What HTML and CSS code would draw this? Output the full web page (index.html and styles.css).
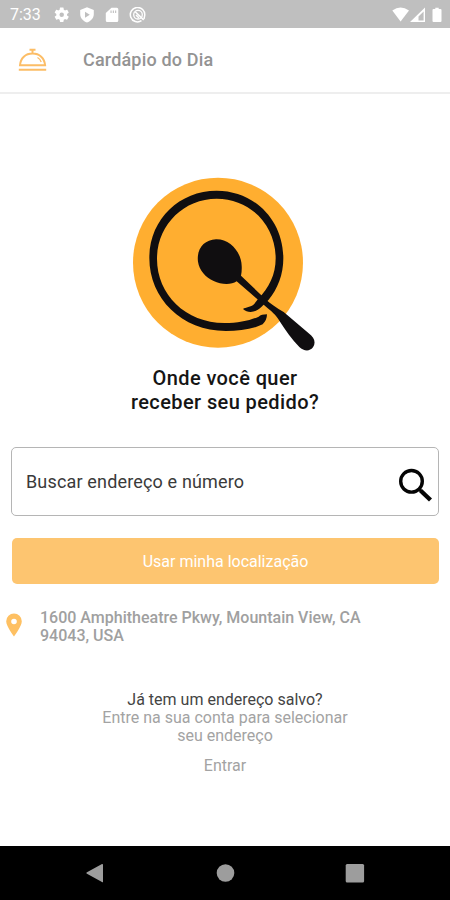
FILE: index.html
```html
<!DOCTYPE html>
<html lang="pt-BR">
<head>
<meta charset="utf-8">
<meta name="viewport" content="width=device-width, initial-scale=1">
<title>Cardápio do Dia</title>
<link rel="stylesheet" href="styles.css">
</head>
<body>
<div class="screen">
  <div class="status">
    <span class="clock">7:33</span>
    <svg class="status-left" viewBox="0 0 92 16" fill="#fff">
      <g transform="translate(-1.300 -1.300) scale(.75)"><path fill-rule="evenodd" d="M19.140 12.940a7 7 0 0 0 0-1.880l2.030-1.580a.5.5 0 0 0 .12-.61l-1.920-3.320a.5.5 0 0 0-.59-.22l-2.390.96a7 7 0 0 0-1.620-.94l-.36-2.540a.5.5 0 0 0-.48-.41h-3.840a.5.5 0 0 0-.47.41l-.36 2.540a7 7 0 0 0-1.620.94l-2.390-.96a.5.5 0 0 0-.59.22L2.740 8.870a.5.5 0 0 0 .12.61l2.030 1.580a7 7 0 0 0 0 1.880l-2.030 1.580a.5.5 0 0 0-.12.61l1.920 3.320c.12.22.37.29.59.22l2.390-.96c.5.38 1.030.7 1.620.94l.36 2.540c.05.24.24.41.48.41h3.840c.24 0 .44-.17.47-.41l.36-2.540a7 7 0 0 0 1.620-.94l2.390.96c.22.08.47 0 .59-.22l1.920-3.320a.5.5 0 0 0-.12-.61zM12 15a3 3 0 1 1 0-6 3 3 0 0 1 0 6z"/></g>
      <path fill-rule="evenodd" d="M33 .3l6.800 2.700v4.300c0 3.700-3 6.900-6.800 8.200-3.800-1.300-6.800-4.500-6.800-8.200V3zM31 4.700v6l4.800-3z"/>
      <path fill-rule="evenodd" d="M57.500.8h5.300q1.500 0 1.500 1.500v11.200q0 1.500-1.500 1.500h-9.500q-1.500 0-1.500-1.500V6zM56.500 3.500h1.100V6h-1.100zM58.800 3.500h1.100V6h-1.100zM61.100 3.500h1.100V6h-1.100z"/>
      <g fill="none" stroke="#fff"><path stroke-width="1.500" d="M87.500 13.700A7.200 7.200 0 1 1 90.700 8.500L90 12"/><circle cx="84" cy="7.700" r="4.300" stroke-width="1.300"/><path stroke-width="1.500" d="M81.200 4.700l8.500 8.200M82 8l3 3"/></g>
    </svg>
    <svg class="status-right" viewBox="0 0 52 16" fill="#fff">
      <path d="M.3 3.500Q8.500-2.500 17 3.500L8.600 14.500z"/>
      <path fill-rule="evenodd" d="M18 15L33 .5V15zM26.500 13.600H31.600V4.600L26.500 9.600z"/>
      <path d="M43.300.7h3.400V2h1.800q1 0 1 1v11q0 1-1 1h-7q-1 0-1-1V3q0-1 1-1h1.800z"/>
    </svg>
  </div>
  <header class="header">
    <svg class="bell" viewBox="0 0 28 24" fill="none" stroke="#fcbd66" stroke-width="2">
      <path d="M1.500 17.200C2 10 7 5.500 14 5.500S26 10 26.600 17.200zM.3 21.700h27.400M11 1.700h6M14 2v4"/><path stroke-width="1.300" d="M19 9.500q3 1.800 3.700 4.500"/>
    </svg>
    <h1 class="title">Cardápio do Dia</h1>
  </header>
  <main class="main">
    <svg class="logo" viewBox="30 18 570 534">
      <circle cx="294" cy="278" r="255" fill="#ffae30"/>
      <path fill="#100e10" fill-rule="evenodd" d="M369 417C377 412 393 412 402 403L414 387C447 354 467 314 467 265C467 163 389 86 290 86C190 86 111 166 111 267C111 373 197 459 313 459C356 459 390 451 416 440Q424 433 441 433Q441 450 428 463C398 478 357 483 318 483C185 483 88 385 88 264C88 149 177 62 290 62C403 62 490 151 490 265C490 314 473 357 446 389L424 411C407 429 383 430 369 417Z"/>
      <path fill="#100e10" d="M234 275C229 238 252 209 288 208C330 207 364 247 365 287Q366 302 363 317L435 386C452 402 470 413 491 426L566 490C584 503 588 518 579 532C568 546 551 543 538 531C515 507 497 481 480 455C466 431 455 425 438 410L350 334C333 346 303 344 281 333C257 322 238 301 234 275Z"/>
    </svg>
    <h2 class="question">Onde você quer<br>receber seu pedido?</h2>
    <div class="search">
      <span class="placeholder">Buscar endereço e número</span>
      <svg class="lens" viewBox="0 0 34 34" fill="none" stroke="#050505"><circle cx="13.500" cy="13.300" r="10.800" stroke-width="3.400"/><path stroke-width="3" d="M20.500 20.500l3 3"/><path stroke-width="4.400" d="M22.500 22.500L32.500 32"/></svg>
    </div>
    <button class="locate" type="button"><span>Usar minha localização</span></button>
    <div class="address">
      <svg class="pin" viewBox="0 0 16 24"><path fill="#fec062" fill-rule="evenodd" d="M8 .5a7.800 7.800 0 0 0-7.800 7.800C.2 13.500 8 23.500 8 23.500s7.800-10 7.800-15.200A7.800 7.800 0 0 0 8 .5zm0 5.200a2.800 2.800 0 1 1 0 5.600 2.800 2.800 0 0 1 0-5.600z"/></svg>
      <p class="address-text">1600 Amphitheatre Pkwy, Mountain View, CA<br>94043, USA</p>
    </div>
    <section class="account">
      <p class="saved">Já tem um endereço salvo?</p>
      <p class="hint">Entre na sua conta para selecionar<br>seu endereço</p>
      <a class="enter">Entrar</a>
    </section>
  </main>
  <nav class="nav">
    <svg viewBox="0 0 20 20"><path d="M18 1.500v17.500q-.5.500-1 0L1.500 10.500v-1L17 1q.7-.2 1 .5z"/></svg>
    <svg viewBox="0 0 20 20"><circle cx="10.500" cy="10" r="8.800"/></svg>
    <svg viewBox="0 0 20 20"><rect x=".7" y="1" width="18.400" height="18.400" rx="1.500"/></svg>
  </nav>
</div>
</body>
</html>
```
FILE: styles.css
```css
* { box-sizing: border-box; }
body { margin: 0; background: #fff; font-family: Roboto, "Liberation Sans", sans-serif; }
h1, h2, p { margin: 0; font-weight: 400; }
svg { display: block; flex: none; }
.screen { width: 450px; height: 900px; display: flex; flex-direction: column; overflow: hidden; }
.status { height: 28px; flex: none; background: #bfbfbf; display: flex; align-items: center; padding: 1px 6px 0 10px; }
.clock { width: 44px; color: #fff; font-size: 16px; line-height: 20px; }
.status-left { width: 92px; height: 16px; }
.status-right { width: 52px; height: 16px; margin-left: auto; }
.header { height: 66px; flex: none; display: flex; align-items: center; padding-left: 18px; border-bottom: 2px solid #eee; }
.bell { width: 29px; height: 24px; margin-right: 36px; }
.title { font-size: 18px; line-height: 24px; font-weight: 500; letter-spacing: .17px; color: #939393; }
.main { flex: 1; display: flex; flex-direction: column; padding: 82px 11px 0; }
.logo { width: 190px; height: 178px; margin-left: 119px; }
.question { margin-top: 12px; text-align: center; font-size: 20px; line-height: 24px; font-weight: 500; letter-spacing: .4px; color: #151515; }
.search { height: 69px; margin-top: 33px; border: 1px solid #b5b5b5; border-radius: 5px; display: flex; align-items: center; justify-content: space-between; padding: 0 6px 0 14px; }
.placeholder { font-size: 18px; letter-spacing: .16px; color: #3a3a3a; }
.lens { width: 34px; height: 34px; margin-top: 7px; }
.locate { height: 46px; margin: 22px 0 0 1px; padding: 2px 0 0; border: 0; border-radius: 5px; background: #fdc570; color: #fff; font: 400 16px/20px Roboto, sans-serif; }
.address { display: flex; align-items: flex-start; margin: 24px 0 0 -5px; }
.pin { width: 16px; height: 24px; margin-top: 5px; }
.address-text { margin-top: 1px; margin-left: 18px; font-size: 16px; line-height: 18px; font-weight: 500; color: #a0a0a0; }
.account { margin-top: 46px; text-align: center; font-size: 16px; line-height: 18px; color: #a3a3a3; }
.saved { color: #444; }
.enter { display: block; margin-top: 12px; }
.nav { height: 54px; flex: none; background: #000; display: flex; align-items: center; justify-content: space-between; padding: 0 85px; fill: #9d9d9d; }
.nav svg { width: 20px; height: 20px; }
```
